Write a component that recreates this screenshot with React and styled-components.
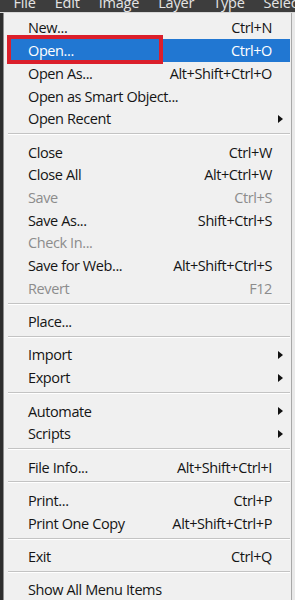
import React from "react";
import styled, { createGlobalStyle } from "styled-components";

const GlobalStyle = createGlobalStyle`
  html, body {
    margin: 0;
    padding: 0;
    background: #3a3a3a;
    overflow: hidden;
  }
`;

const menuBar = ["File", "Edit", "Image", "Layer", "Type", "Select"];

const fileMenu = [
  { label: "New...", keys: "Ctrl+N" },
  { label: "Open...", keys: "Ctrl+O", active: true },
  { label: "Open As...", keys: "Alt+Shift+Ctrl+O" },
  { label: "Open as Smart Object..." },
  { label: "Open Recent", sub: true },
  "sep",
  { label: "Close", keys: "Ctrl+W" },
  { label: "Close All", keys: "Alt+Ctrl+W" },
  { label: "Save", keys: "Ctrl+S", disabled: true },
  { label: "Save As...", keys: "Shift+Ctrl+S" },
  { label: "Check In...", disabled: true },
  { label: "Save for Web...", keys: "Alt+Shift+Ctrl+S" },
  { label: "Revert", keys: "F12", disabled: true },
  "sep",
  { label: "Place..." },
  "sep",
  { label: "Import", sub: true },
  { label: "Export", sub: true },
  "sep",
  { label: "Automate", sub: true },
  { label: "Scripts", sub: true },
  "sep",
  { label: "File Info...", keys: "Alt+Shift+Ctrl+I" },
  "sep",
  { label: "Print...", keys: "Ctrl+P" },
  { label: "Print One Copy", keys: "Alt+Shift+Ctrl+P" },
  "sep",
  { label: "Exit", keys: "Ctrl+Q" },
  "sep",
  { label: "Show All Menu Items" },
];

const App = () => {
  return (
    <>
      <GlobalStyle />
      <Screen>
        <MenuBar>
          {menuBar.map((name) => (
            <BarItem key={name}>{name}</BarItem>
          ))}
        </MenuBar>
        <Workspace>
          <DarkEdge />
          <Panel>
            {fileMenu.map((item, i) =>
              item === "sep" ? (
                <Separator key={i} />
              ) : (
                <Item key={i} $active={item.active} $disabled={item.disabled}>
                  <Label>{item.label}</Label>
                  <Keys>{item.keys}</Keys>
                  <ArrowCell>{item.sub && <Arrow />}</ArrowCell>
                  {item.active && <Callout />}
                </Item>
              )
            )}
          </Panel>
          <LightEdge />
        </Workspace>
      </Screen>
    </>
  );
};

export default App;

const Screen = styled.div`
  width: 295px;
  height: 600px;
  display: flex;
  flex-direction: column;
  overflow: hidden;
  font-family: "Open Sans", "Noto Sans", sans-serif;
`;

const MenuBar = styled.div`
  height: 12px;
  flex: none;
  display: flex;
  padding-left: 4px;
  background: #3d3d3d;
  overflow: hidden;
`;

const BarItem = styled.div`
  padding: 0 9.5px;
  margin-top: -5px;
  font-size: 14.5px;
  line-height: 15px;
  letter-spacing: -0.2px;
  color: #e4e4e4;
  white-space: nowrap;
`;

const Workspace = styled.div`
  flex: 1;
  display: flex;
  border-top: 1px solid #d8d8d8;
`;

const DarkEdge = styled.div`
  width: 3px;
  background: #2e2e2e;
`;

const LightEdge = styled.div`
  width: 3px;
  background: #e9e9e9;
`;

const Panel = styled.div`
  flex: 1;
  padding: 3.65px 1px 0 4px;
  background: #f0f0f0;
  border-left: 1px solid #8f8f8f;
  border-right: 1px solid #a8a8a8;
`;

const Item = styled.div`
  position: relative;
  height: 22.7px;
  display: flex;
  align-items: center;
  padding: 0 4px 0 20px;
  font-size: 14.5px;
  letter-spacing: -0.4px;
  color: ${(p) => (p.$active ? "#ffffff" : p.$disabled ? "#8c8c8c" : "#151515")};
  background: ${(p) => (p.$active ? "#2177d2" : "transparent")};
  white-space: nowrap;
`;

const Label = styled.span`
  flex: 1;
`;

const Keys = styled.span`
  text-align: right;
`;

const ArrowCell = styled.span`
  width: 14px;
  display: flex;
  justify-content: center;
`;

const Arrow = styled.span`
  width: 0;
  height: 0;
  margin-left: 2px;
  border-top: 4px solid transparent;
  border-bottom: 4px solid transparent;
  border-left: 5px solid #111;
`;

const Separator = styled.div`
  height: 10.7px;
  box-sizing: border-box;
  padding-top: 3px;

  &::before {
    content: "";
    display: block;
    height: 1px;
    background: #c3c3c3;
    border-bottom: 1px solid #ffffff;
  }
`;

const Callout = styled.div`
  position: absolute;
  left: -1px;
  top: -4px;
  width: 156px;
  height: 29px;
  box-sizing: border-box;
  border: 4px solid #db1f2b;
  pointer-events: none;
`;
